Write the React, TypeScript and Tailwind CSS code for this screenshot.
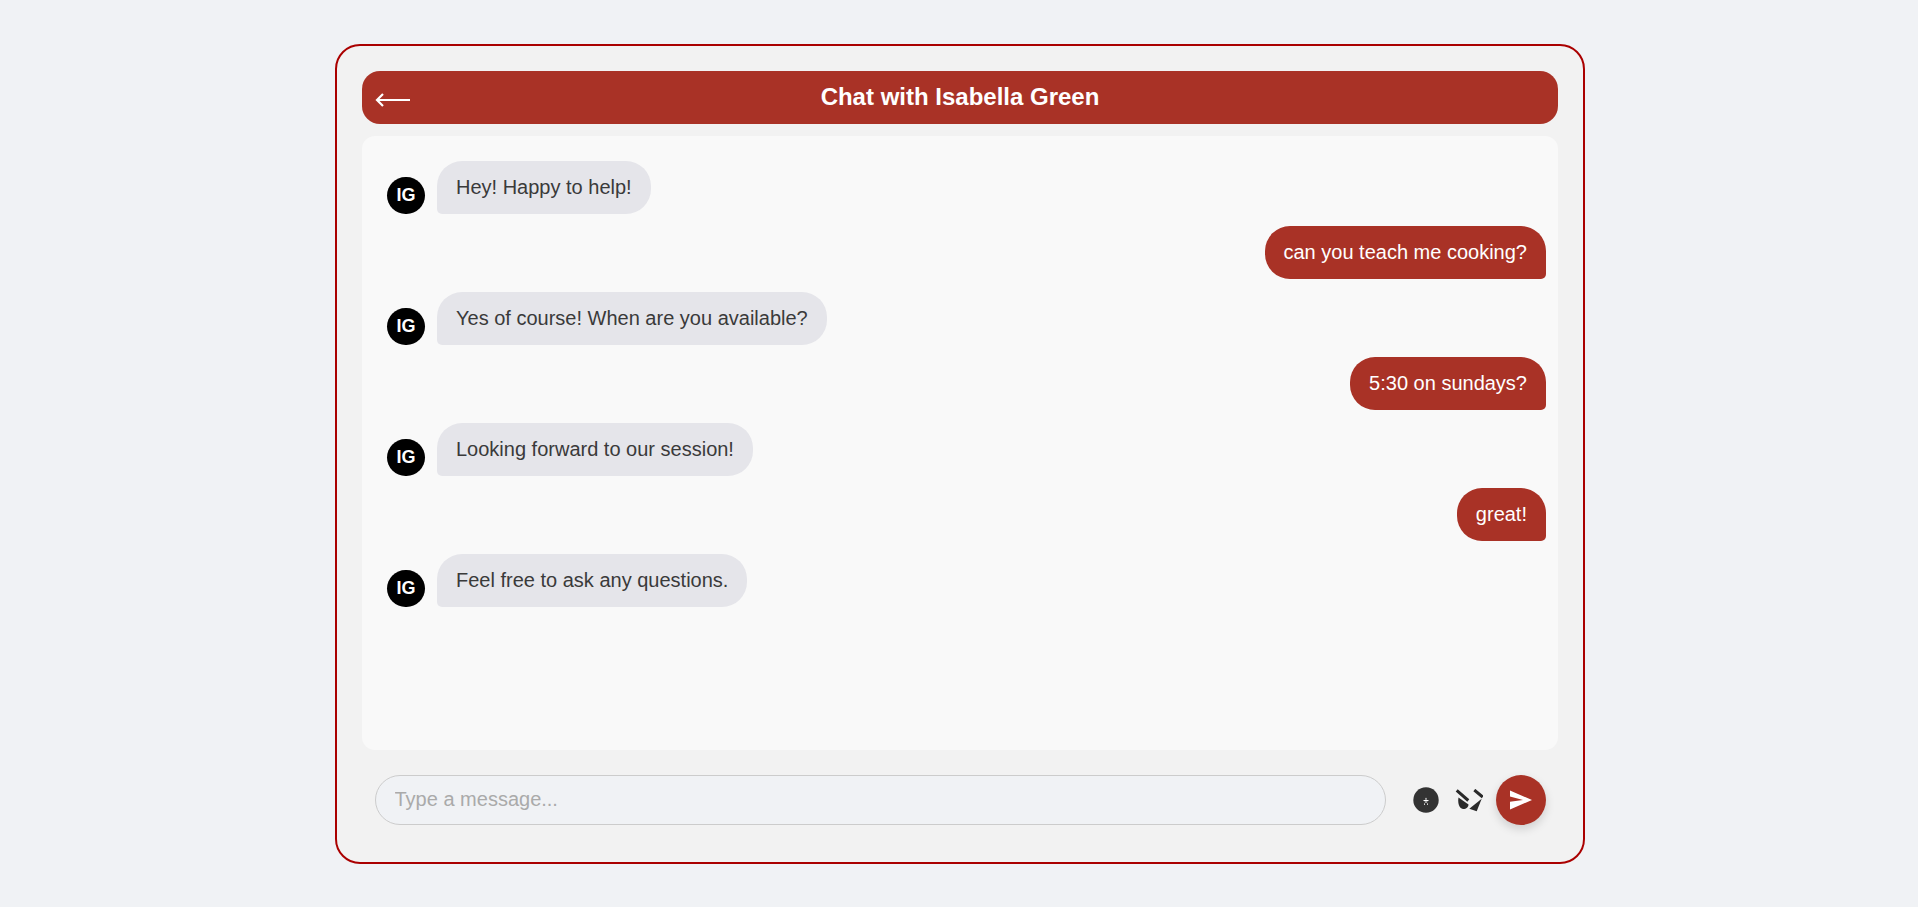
const messages = [
  { from: "them", text: "Hey! Happy to help!" },
  { from: "me", text: "can you teach me cooking?" },
  { from: "them", text: "Yes of course! When are you available?" },
  { from: "me", text: "5:30 on sundays?" },
  { from: "them", text: "Looking forward to our session!" },
  { from: "me", text: "great!" },
  { from: "them", text: "Feel free to ask any questions." },
];

function Bubble({ from, text }: { from: string; text: string }) {
  if (from === "me") {
    return (
      <div className="flex justify-end">
        <div className="rounded-[25px] rounded-br-[5px] bg-[#a93226] px-[19px] py-[15px] text-[20px] leading-[22.6px] text-white">
          {text}
        </div>
      </div>
    );
  }
  return (
    <div className="flex items-end gap-[12px]">
      <div className="flex h-[37px] w-[38px] items-center justify-center rounded-full bg-black text-[18px] font-bold text-white">
        IG
      </div>
      <div className="rounded-[25px] rounded-bl-[5px] bg-[#e5e5ea] px-[19px] py-[15px] text-[20px] leading-[22.6px] text-[#3a3a3a]">
        {text}
      </div>
    </div>
  );
}

export default function App() {
  return (
    <div className="flex h-[907px] items-start justify-center bg-[#f0f2f5] pl-[2px] pt-[44px] font-['Liberation_Sans',sans-serif]">
      <div className="flex h-[820px] w-[1250px] flex-col rounded-[25px] border-2 border-[#aa0000] bg-[#f2f2f2] p-[25px]">
        <div className="relative flex h-[53px] items-center justify-center rounded-[18px] bg-[#a93226] pb-px text-[24px] font-bold text-white">
          {/* back arrow */}
          <svg viewBox="0 0 36 14" className="absolute left-[13px] top-[22px] h-[14px] w-[36px]" fill="none" stroke="#ffffff">
            <path d="M2 7h33" strokeWidth="2" />
            <path d="M8 1L2 7l6 6" strokeWidth="2.200" />
          </svg>
          Chat with Isabella Green
        </div>

        <div className="mt-[12px] flex h-[614px] flex-col gap-[12.9px] rounded-[13px] bg-[#f9f9f9] pb-[25px] pl-[25px] pr-[12px] pt-[25px]">
          {messages.map((m, i) => (
            <Bubble key={i} from={m.from} text={m.text} />
          ))}
        </div>

        <div className="mt-[25px] flex items-center pl-[13px]">
          <input
            placeholder="Type a message..."
            className="h-[50px] w-[1011px] shrink-0 rounded-[25px] border border-[#cccccc] bg-[#f0f2f5] pb-[2px] pl-[18.500px] pr-[19px] text-[20px] outline-none placeholder:text-[#aaaaaa]"
          />
          <svg viewBox="0 0 26 26" className="ml-[27px] size-[26px] shrink-0">
            <circle cx="13" cy="13" r="12.7" fill="#333333" />
            <path d="M13 10.5l1 2h-2zM10.5 13h5v1h-5zM11.5 14.5h3l-.5 1h-2z" fill="#ffffff" />
            <path d="M11 16.5h1v1.2h-1zM14 16.5h1v1.2h-1z" fill="#ffffff" />
          </svg>
          <svg viewBox="0 0 28 23" className="ml-[16px] h-[23px] w-[28px] shrink-0">
            <path d="M1.700 1.300L13.300 11.500M19.300 1L27.700 8" stroke="#2a2a2a" strokeWidth="3" fill="none" />
            <path d="M3.500 8.500L13.500 15.500C13.500 18 11 20.200 8 20C4 19.700 2.500 13.500 3.500 8.500z" fill="#2a2a2a" />
            <path d="M26.700 9.700L14.300 19.700L21.700 22.300z" fill="#2a2a2a" />
          </svg>
          <button className="ml-[13px] flex size-[50px] shrink-0 items-center justify-center rounded-full bg-[#a93226] shadow-[0_4px_10px_rgba(0,0,0,0.15)]">
            <svg viewBox="0 0 24 24" className="size-[24px]" fill="#ffffff">
              <path d="M1 2.500L23 12 1 21.500v-7.700L14 12 1 8.500z" />
            </svg>
          </button>
        </div>
      </div>
    </div>
  );
}
